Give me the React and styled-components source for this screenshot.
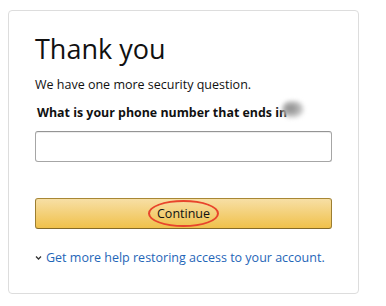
import React from "react";
import styled, { createGlobalStyle } from "styled-components";

const GlobalStyle = createGlobalStyle`
  body {
    margin: 0;
    background: #fff;
    font-family: "Open Sans", "Liberation Sans", sans-serif;
    color: #111;
  }
`;

const Page = styled.div`
  padding: 10px 0 0 8px;
`;

const Card = styled.div`
  box-sizing: border-box;
  width: 351px;
  height: 284px;
  border: 1px solid #ddd;
  border-radius: 4px;
  padding: 20px 26px 0 26px;
  display: flex;
  flex-direction: column;
`;

const Title = styled.h1`
  margin: 0;
  font-size: 27px;
  font-weight: 400;
  line-height: 36px;
  color: #111;
`;

const Intro = styled.p`
  margin: 8px 0 0 0;
  font-size: 12.5px;
  line-height: 19px;
  color: #111;
`;

const Label = styled.label`
  margin: 9px 0 0 2px;
  font-size: 12.4px;
  font-weight: 700;
  line-height: 19px;
  display: flex;
  align-items: center;
`;

/* masked last digits of the phone number */
const Blur = styled.span`
  display: inline-block;
  width: 22px;
  height: 17px;
  margin-left: -5px;
  border-radius: 9px;
  background: radial-gradient(ellipse at 40% 45%, #8a8a8a 0%, #b5b5b5 45%, rgba(220, 220, 220, 0.6) 75%, rgba(255, 255, 255, 0) 100%);
  filter: blur(2px);
  transform: translateY(-3px);
`;

const Input = styled.input`
  box-sizing: border-box;
  margin-top: 9px;
  width: 297px;
  height: 31px;
  border: 1px solid #a6a6a6;
  border-top-color: #949494;
  border-radius: 3px;
  box-shadow: 0 1px 0 rgba(255, 255, 255, 0.5), 0 1px 0 rgba(0, 0, 0, 0.07) inset;
  outline: none;
`;

const Button = styled.button`
  box-sizing: border-box;
  margin-top: 36px;
  width: 297px;
  height: 31px;
  border: 1px solid;
  border-color: #a88734 #9c7e31 #846a29;
  border-radius: 3px;
  background: linear-gradient(to bottom, #f7dfa5, #f0c14b);
  font-family: inherit;
  font-size: 12.5px;
  color: #111;
  display: flex;
  align-items: center;
  justify-content: center;
  padding: 0;
`;

const Circled = styled.span`
  padding: 3px 7px;
  border: 2px solid #e8452c;
  border-radius: 50%;
  line-height: 17px;
`;

const HelpLink = styled.a`
  margin-top: 19px;
  font-size: 12.5px;
  line-height: 19px;
  color: #1f66b8;
  text-decoration: none;
  white-space: nowrap;
  display: flex;
  align-items: center;
  gap: 4px;
`;

const Chevron = () => (
  <svg width="7" height="6" viewBox="0 0 7 6">
    <path d="M1 1.5 L3.5 4 L6 1.5" fill="none" stroke="#333" strokeWidth="1.3" />
  </svg>
);

export default function App() {
  return (
    <Page>
      <GlobalStyle />
      <Card>
        <Title>Thank you</Title>
        <Intro>We have one more security question.</Intro>
        <Label>
          What is your phone number that ends in
          <Blur />
        </Label>
        <Input type="text" />
        <Button>
          <Circled>Continue</Circled>
        </Button>
        <HelpLink href="#">
          <Chevron />
          Get more help restoring access to your account.
        </HelpLink>
      </Card>
    </Page>
  );
}
